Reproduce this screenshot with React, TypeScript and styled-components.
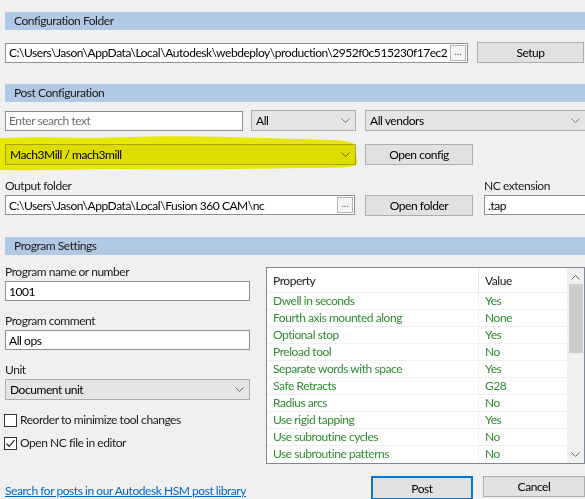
import { ReactNode } from "react";
import styled, { createGlobalStyle } from "styled-components";

const GlobalStyle = createGlobalStyle`
  html, body {
    margin: 0;
    padding: 0;
    background: #f0f0f0;
    overflow: hidden;
  }
  body {
    font-family: Lato, "Noto Sans", sans-serif;
    font-size: 12px;
    letter-spacing: -0.45px;
    color: #000;
  }
`;

const properties: [string, string][] = [
  ["Dwell in seconds", "Yes"],
  ["Fourth axis mounted along", "None"],
  ["Optional stop", "Yes"],
  ["Preload tool", "No"],
  ["Separate words with space", "Yes"],
  ["Safe Retracts", "G28"],
  ["Radius arcs", "No"],
  ["Use rigid tapping", "Yes"],
  ["Use subroutine cycles", "No"],
  ["Use subroutine patterns", "No"],
];

function Chevron({ up }: { up?: boolean }) {
  return (
    <svg width="9" height="5" viewBox="0 0 9 5">
      <path
        d={up ? "M0.5 4.5 L4.5 0.5 L8.5 4.5" : "M0.5 0.5 L4.5 4.5 L8.5 0.5"}
        fill="none"
        stroke="#707070"
        strokeWidth="1"
      />
    </svg>
  );
}

function Dropdown({ w, ml, children }: { w: number; ml?: number; children: ReactNode }) {
  return (
    <Select $w={w} $ml={ml}>
      <span>{children}</span>
      <Chevron />
    </Select>
  );
}

function App() {
  return (
    <>
      <GlobalStyle />
      <Dialog>
        <Highlight viewBox="0 0 360 38" width="360" height="38">
          <path
            d="M0 3 C40 1 80 4 130 2 C190 0 250 3 300 4 C330 5 352 5 355 10 L357 28 C356 33 340 33 300 33 C240 34 180 35 120 34 C70 34 30 36 0 35 Z"
            fill="#f6f600"
          />
        </Highlight>

        <Band $top={12}>Configuration Folder</Band>
        <Row $top={12}>
          <TextField $w={463}>
            <FieldText>
              C:\Users\Jason\AppData\Local\Autodesk\webdeploy\production\2952f0c515230f17ec2847
            </FieldText>
            <Browse>...</Browse>
          </TextField>
          <Button $w={107}>Setup</Button>
        </Row>

        <Band $top={21}>Post Configuration</Band>
        <Row $top={8} $gap={8}>
          <TextField $w={238}>
            <Placeholder>Enter search text</Placeholder>
          </TextField>
          <Dropdown w={105}>All</Dropdown>
          <Dropdown w={221} ml={1}>
            All vendors
          </Dropdown>
        </Row>
        <Row $top={13}>
          <Dropdown w={351}>Mach3Mill / mach3mill</Dropdown>
          <Button $w={108}>Open config</Button>
        </Row>

        <OutputGrid>
          <Label>Output folder</Label>
          <span />
          <Label>NC extension</Label>
          <TextField $w={350}>
            <FieldText>C:\Users\Jason\AppData\Local\Fusion 360 CAM\nc</FieldText>
            <Browse>...</Browse>
          </TextField>
          <Button $w={108}>Open folder</Button>
          <TextField $w={120}>
            <FieldText>.tap</FieldText>
          </TextField>
        </OutputGrid>

        <Band $top={21}>Program Settings</Band>
        <SettingsBody>
          <LeftColumn>
            <Field>
              <Label>Program name or number</Label>
              <TextField $w={245}>
                <FieldText>1001</FieldText>
              </TextField>
            </Field>
            <Field>
              <Label>Program comment</Label>
              <TextField $w={245}>
                <FieldText>All ops</FieldText>
              </TextField>
            </Field>
            <Field>
              <Label>Unit</Label>
              <Dropdown w={245}>Document unit</Dropdown>
            </Field>
            <Checks>
              <CheckRow>
                <Box />
                Reorder to minimize tool changes
              </CheckRow>
              <CheckRow>
                <Box>
                  <svg width="11" height="11" viewBox="0 0 11 11">
                    <path d="M1.5 5.5 L4.2 8.3 L9.5 2.2" fill="none" stroke="#222" strokeWidth="1.2" />
                  </svg>
                </Box>
                Open NC file in editor
              </CheckRow>
            </Checks>
          </LeftColumn>

          <Table>
            <TableInner>
              <HeadRow>
                <HeadCell>Property</HeadCell>
                <HeadCell $divider>Value</HeadCell>
              </HeadRow>
              {properties.map(([name, value]) => (
                <PropRow key={name}>
                  <Cell>{name}</Cell>
                  <Cell $divider>{value}</Cell>
                </PropRow>
              ))}
            </TableInner>
            <Scrollbar>
              <Chevron up />
              <Thumb />
              <Chevron />
            </Scrollbar>
          </Table>

          <LibraryLink href="#">Search for posts in our Autodesk HSM post library</LibraryLink>
          <Actions>
            <Button $w={102} $focused>
              Post
            </Button>
            <Button $w={102}>Cancel</Button>
          </Actions>
        </SettingsBody>
      </Dialog>
    </>
  );
}

const Dialog = styled.div`
  position: relative;
  width: 620px;
  padding-left: 5px;
  height: 499px;
  overflow: hidden;
`;

const Highlight = styled.svg`
  position: absolute;
  left: 0;
  top: 135px;
  mix-blend-mode: multiply;
  pointer-events: none;
`;

const Band = styled.div<{ $top: number }>`
  margin-top: ${(p) => p.$top}px;
  height: 18px;
  line-height: 18px;
  padding-left: 9px;
  background: #b1c9e5;
  color: #1a1a1a;
`;

const Row = styled.div<{ $top: number; $gap?: number }>`
  display: flex;
  align-items: center;
  gap: ${(p) => p.$gap ?? 9}px;
  margin-top: ${(p) => p.$top}px;
`;

const TextField = styled.div<{ $w: number }>`
  box-sizing: border-box;
  width: ${(p) => p.$w}px;
  height: 20px;
  display: flex;
  align-items: center;
  gap: 2px;
  padding: 0 1px 0 3px;
  background: #fff;
  border: 1px solid #8f8f8f;
  flex-shrink: 0;
`;

const FieldText = styled.span`
  flex: 1;
  white-space: nowrap;
  overflow: hidden;
`;

const Placeholder = styled(FieldText)`
  color: #6d6d6d;
`;

const Browse = styled.span`
  box-sizing: border-box;
  width: 16px;
  height: 16px;
  line-height: 11px;
  text-align: center;
  font-size: 10px;
  letter-spacing: 0;
  color: #555;
  background: #f4f4f4;
  border: 1px solid #b5b5b5;
  flex-shrink: 0;
`;

const Select = styled.div<{ $w: number; $ml?: number }>`
  box-sizing: border-box;
  width: ${(p) => p.$w}px;
  height: 21px;
  margin-left: ${(p) => p.$ml ?? 0}px;
  display: flex;
  align-items: center;
  justify-content: space-between;
  padding: 0 5px 0 4px;
  background: #e5e5e5;
  border: 1px solid #acacac;
  flex-shrink: 0;
`;

const Button = styled.div<{ $w: number; $focused?: boolean }>`
  box-sizing: border-box;
  width: ${(p) => p.$w}px;
  height: ${(p) => (p.$focused ? 24 : 21)}px;
  display: flex;
  align-items: center;
  justify-content: center;
  background: #e1e1e1;
  border: ${(p) => (p.$focused ? "2px solid #0078d7" : "1px solid #adadad")};
  flex-shrink: 0;
`;

const Label = styled.div`
  line-height: 16px;
  color: #1a1a1a;
`;

const OutputGrid = styled.div`
  display: grid;
  grid-template-columns: 350px 108px 120px;
  column-gap: 10px;
  row-gap: 1px;
  margin-top: 13px;
  & > :nth-child(3n) {
    margin-left: 1px;
  }
`;

const SettingsBody = styled.div`
  display: grid;
  grid-template-columns: 245px 319px;
  column-gap: 16px;
  row-gap: 12px;
  margin-top: 9px;
`;

const LeftColumn = styled.div`
  display: flex;
  flex-direction: column;
  gap: 12px;
`;

const Field = styled.div`
  display: flex;
  flex-direction: column;
  gap: 1px;
`;

const Checks = styled.div`
  display: flex;
  flex-direction: column;
  gap: 7px;
`;

const CheckRow = styled.div`
  display: flex;
  align-items: center;
  gap: 3px;
  line-height: 16px;
  color: #1a1a1a;
  margin-left: -1px;
`;

const Box = styled.span`
  box-sizing: border-box;
  width: 13px;
  height: 13px;
  background: #fff;
  border: 1px solid #333;
  display: flex;
  align-items: center;
  justify-content: center;
`;

const Table = styled.div`
  box-sizing: border-box;
  margin-top: 3px;
  height: 197px;
  display: flex;
  background: #fff;
  border: 1px solid #828790;
`;

const TableInner = styled.div`
  flex: 1;
`;

const HeadRow = styled.div`
  display: grid;
  grid-template-columns: 211px 1fr;
  height: 24px;
  align-items: center;
`;

const HeadCell = styled.div<{ $divider?: boolean }>`
  height: 100%;
  display: flex;
  align-items: center;
  padding-left: 6px;
  color: #1a1a1a;
  border-left: ${(p) => (p.$divider ? "1px solid #e5e5e5" : "none")};
`;

const PropRow = styled.div`
  display: grid;
  grid-template-columns: 211px 1fr;
  height: 17px;
  border-top: 1px solid #f0f0f0;
  box-sizing: border-box;
`;

const Cell = styled.div<{ $divider?: boolean }>`
  line-height: 16px;
  padding-left: 6px;
  color: #2e8b2e;
  white-space: nowrap;
  border-left: ${(p) => (p.$divider ? "1px solid #f0f0f0" : "none")};
`;

const Scrollbar = styled.div`
  width: 17px;
  background: #f0f0f0;
  display: flex;
  flex-direction: column;
  align-items: center;
  padding: 7px 0 6px;
  gap: 4px;
`;

const Thumb = styled.div`
  width: 14px;
  height: 69px;
  background: #cdcdcd;
  margin-bottom: auto;
`;

const LibraryLink = styled.a`
  align-self: end;
  white-space: nowrap;
  color: #0066cc;
  text-decoration: underline;
  line-height: 16px;
  margin-bottom: 1px;
`;

const Actions = styled.div`
  display: flex;
  gap: 10px;
  padding-left: 105px;
`;

export default App;
